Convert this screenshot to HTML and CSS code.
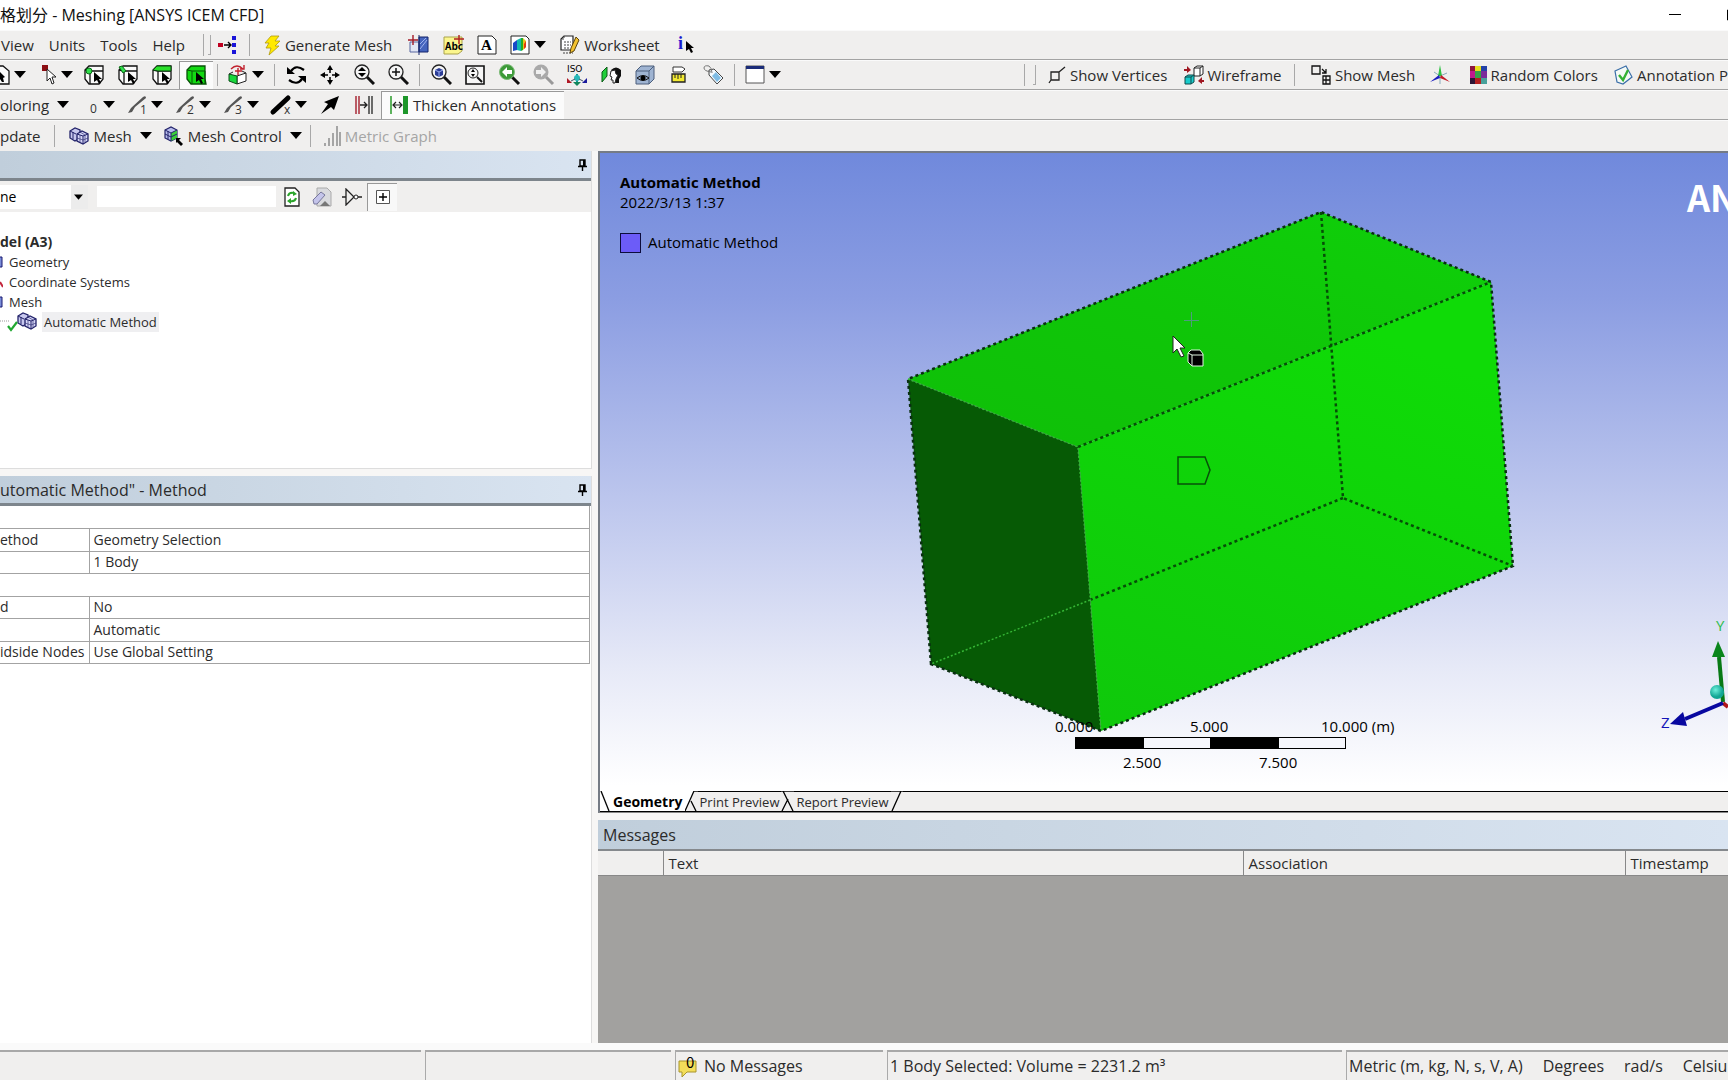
FILE: index.html
```html
<!DOCTYPE html>
<html lang="en">
<head>
<meta charset="utf-8">
<title>Meshing [ANSYS ICEM CFD]</title>
<link rel="stylesheet" href="styles.css">
</head>
<body>
<svg class="defs" width="0" height="0" aria-hidden="true">
  <defs>
    <symbol id="caret" viewBox="0 0 12 7"><path d="M0 0h12L6 7z" fill="#000"/></symbol>
    <symbol id="box" viewBox="0 0 20 20"><path d="M1 5L5 1H19V14L15 19H5L1 14Z" fill="#fafafa" stroke="#111" stroke-width="1.3"/><path d="M1 5L6 6V19M6 6H19" fill="none" stroke="#111" stroke-width="1.3"/></symbol>
    <symbol id="ptr" viewBox="0 0 8 12"><path d="M0 0L8 7H5L7 11L5 12L3 8L0 10Z" fill="#000"/></symbol>
    <symbol id="lens" viewBox="0 0 21 21"><path d="M13 13l7 7" stroke="#111" stroke-width="3"/><circle cx="8" cy="8" r="7" fill="#f4f4f4" stroke="#222" stroke-width="1.3"/></symbol>
    <symbol id="meshcubes" viewBox="0 0 20 18"><path d="M1 4L6 1l5 2v8l-5 3-5-3z" fill="#c8c8ee" stroke="#23236a" stroke-width="1.3"/><path d="M8 7l5-3 6 3v7l-5 3-6-3z" fill="#d5d5f6" stroke="#23236a" stroke-width="1.3"/><path d="M8 7l6 2 5-2M14 9v8M1 4l6 3M4 5v7" fill="none" stroke="#23236a"/><path d="M11 8v7M16 8v7M8 11l6 2 5-2M11 5l5 3" fill="none" stroke="#23236a" stroke-width=".6"/></symbol>
    <symbol id="pin" viewBox="0 0 9 12"><path d="M2 1H7V7H2ZM0 7.500H9M4.500 8V12" fill="none" stroke="#000" stroke-width="1.4"/><path d="M5 1h2v6H5z"/></symbol>
    <symbol id="stroke" viewBox="0 0 20 20"><path d="M1 18L4 13 16 2q3-2 3 1L8 12 5 17Z" fill="#555"/></symbol>
  </defs>
</svg>
<div class="app">
  <header class="titlebar">
    <h1 class="caption">格划分 - Meshing [ANSYS ICEM CFD]</h1>
    <div class="winctl">
      <button class="win" aria-label="Minimize"><svg width="12" height="12"><path d="M0 5.500H12" stroke="#000"/></svg></button>
      <button class="win edge" aria-label="Maximize"><svg width="12" height="12"><path d="M.5 1V11H11V1Z" fill="none" stroke="#000"/></svg></button>
    </div>
  </header>

  <nav class="bar" aria-label="Menu">
    <button class="menu">View</button><button class="menu">Units</button><button class="menu">Tools</button><button class="menu">Help</button>
    <span class="sep"></span><span class="grip"></span>
    <button class="ico" aria-label="Connections"><svg width="20" height="18"><path d="M0 7h5v4H0z" fill="#c00020"/><path d="M6 9h7M10 6l3 3-3 3" fill="none" stroke="#000" stroke-width="1.400"/><path d="M14 0h4v4h-4zM14 7h4v4h-4zM14 14h4v4h-4z" fill="#1a14d8"/></svg></button>
    <span class="sep wide"></span>
    <button class="cmd"><svg width="17" height="20"><path d="M7 1h8l-4 5h5l-5 5h4L5 20l2-7H2l3-5H1z" fill="#ffe900" stroke="#b09a10" stroke-width=".8"/></svg>Generate Mesh</button>
    <button class="ico" aria-label="Section plane"><svg width="22" height="20"><path d="M2 7h9v10H2z" fill="#e2e6f4" stroke="#5966a0"/><path d="M11 2h9v15h-9z" fill="#4564bd" stroke="#14246a"/><path d="M12 14l7-9M12 9l6-6" stroke="#9eb2ee"/><path d="M5 0v10M0 5h10" stroke="#a31c28" stroke-width="1.400"/><path d="M11 0v20" stroke="#14246a"/></svg></button>
    <button class="ico" aria-label="Annotation"><svg width="21" height="20"><path d="M1 2h18v14l-4 3H1z" fill="#fbf68d" stroke="#aaa34d"/><text x="2" y="15" class="abc">Abc</text><path d="M16 0v9M11 4h10" stroke="#b02020" stroke-width="1.400"/></svg></button>
    <button class="ico" aria-label="Text"><svg width="20" height="20"><path d="M1 1h14l4 4v14H1z" fill="#fff" stroke="#222"/><text x="4" y="15" class="serif">A</text></svg></button>
    <button class="ico dd" aria-label="Contours"><svg width="20" height="20"><path d="M1 1h15l3 3v15H1z" fill="#fff" stroke="#222"/><path d="M3 8l4-3v10l-4 1z" fill="#1749c8"/><path d="M7 5l4-2v13l-4-1z" fill="#12b8b0"/><path d="M11 3h2v12l-2 1z" fill="#22ae22"/><path d="M13 3l3 3v6l-3 3z" fill="#e8c21a"/><path d="M16 6v6l-2 2V9z" fill="#e03a12"/></svg><svg class="car"><use href="#caret"/></svg></button>
    <button class="cmd"><svg width="20" height="20"><path d="M4 1h9v14H1V4z" fill="#fff" stroke="#222" stroke-width="1.200"/><path d="M4 1v3H1M4 7h7M4 10h7M4 13h5M3 18h10" fill="none" stroke="#444" stroke-dasharray="2 1"/><path d="M16 2l3 3-5 11-4 2 1-5z" fill="#f2c230" stroke="#5b430c"/></svg>Worksheet</button>
    <button class="ico" aria-label="Selection info"><svg width="18" height="20"><text x="0" y="14" class="info">i</text><g transform="translate(8 6)"><path d="M0 0L8 7H5L7 11L5 12L3 8L0 10Z"/></g></svg></button>
  </nav>

  <div class="bar split">
    <div class="group">
      <button class="ico dd cut" aria-label="Select type"><svg width="10" height="20"><path d="M0 1H3L9 6V19H0" fill="#fafafa" stroke="#111" stroke-width="1.300"/><path d="M0 7L5 12 3 13 4 17 2 17 0 14"/></svg><svg class="car"><use href="#caret"/></svg></button>
      <button class="ico dd end" aria-label="Select mode"><svg width="15" height="20"><path d="M0 0h6v6H0z" fill="#8b0d12"/><path d="M5 4V16L8 13 10 19 12 18 10 12H14Z" fill="#fff" stroke="#222"/></svg><svg class="car"><use href="#caret"/></svg></button>
      <button class="ico" aria-label="Vertex"><svg width="20" height="20"><use href="#box" width="20" height="20"/><circle cx="5" cy="6" r="3" fill="#2fe04a" stroke="#0a6b16"/><use href="#ptr" x="10" y="7" width="8" height="12"/></svg></button>
      <button class="ico" aria-label="Edge"><svg width="20" height="20"><use href="#box" width="20" height="20"/><path d="M1 2l3-1 4 5-3 2z" fill="#2fe04a" stroke="#0a6b16"/><use href="#ptr" x="10" y="7" width="8" height="12"/></svg></button>
      <button class="ico" aria-label="Face"><svg width="20" height="20"><use href="#box" width="20" height="20"/><path d="M1 5L5 1H19V6H6Z" fill="#2be02b" stroke="#0a4b10"/><use href="#ptr" x="10" y="7" width="8" height="12"/></svg></button>
      <button class="ico on" aria-label="Body"><svg width="21" height="20"><path d="M1 5L5 1H19V14L20 19H5L1 14Z" fill="#12d912" stroke="#085208" stroke-width="1.300"/><path d="M1 5L6 6V19M6 6H19V19" fill="none" stroke="#085208"/><use href="#ptr" x="10" y="7" width="8" height="12"/></svg></button>
      <span class="sep"></span>
      <button class="ico dd" aria-label="Extend"><svg width="20" height="20"><path d="M9 11l9-3v8l-9 3z" fill="#fff" stroke="#222"/><path d="M1 9l8 2v8l-8-3z" fill="#18d83c" stroke="#0b4d16"/><path d="M1 9l4-2M14 6l4 2" stroke="#222"/><path d="M3 4q6-6 12 0M16 0v4h-4M10 3v7M7 6h7" fill="none" stroke="#c0202c" stroke-width="1.400"/></svg><svg class="car"><use href="#caret"/></svg></button>
      <span class="sep"></span>
      <button class="ico" aria-label="Rotate"><svg width="19" height="20"><path d="M4 6Q9-1 17 5M15 14Q10 21 2 15" fill="none" stroke="#000" stroke-width="2.200"/><path d="M0 2v7h8zM19 18v-7h-8z"/></svg></button>
      <button class="ico" aria-label="Pan"><svg width="20" height="20"><path d="M10 3v5M10 12v5M3 10h5M12 10h5" stroke="#000" stroke-width="1.500"/><path d="M10 0l3 5H7zM10 20l3-5H7zM0 10l5-3v6zM20 10l-5-3v6z"/></svg></button>
      <button class="ico" aria-label="Zoom"><svg width="21" height="21"><use href="#lens" width="21" height="21"/><path d="M8 3l4 4H4zM8 13l4-4H4z"/></svg></button>
      <button class="ico" aria-label="Box zoom"><svg width="21" height="21"><use href="#lens" width="21" height="21"/><path d="M8 4v8M4 8h8" stroke="#111" stroke-width="1.500"/></svg></button>
      <span class="sep"></span>
      <button class="ico" aria-label="Zoom to fit"><svg width="21" height="21"><use href="#lens" width="21" height="21"/><path d="M4 6l4-2 4 2v5l-4 2-4-2z" fill="#2b3c95"/><path d="M4 6l4 2 4-2M8 8v5" stroke="#9fb0f5" fill="none"/></svg></button>
      <button class="ico" aria-label="Magnifier"><svg width="20" height="20"><path d="M1 1h18v18H1z" fill="#f6f6f6" stroke="#111" stroke-width="1.600"/><circle cx="8" cy="8" r="5" fill="none" stroke="#222"/><path d="M12 12l5 5" stroke="#111" stroke-width="2"/><path d="M8 4l2 3H6zM8 12l2-3H6z"/></svg></button>
      <button class="ico" aria-label="Previous view"><svg width="21" height="21"><path d="M13 13l7 7" stroke="#111" stroke-width="3"/><circle cx="8" cy="8" r="7.500" fill="#3c9a38" stroke="#7dbb78"/><path d="M3 8l5-5v3h5v4H8v3z" fill="#fff"/></svg></button>
      <button class="ico" aria-label="Next view"><svg width="21" height="21"><path d="M13 13l7 7" stroke="#999" stroke-width="3"/><circle cx="8" cy="8" r="7.500" fill="#a9a9a9"/><path d="M13 8L8 3v3H3v4h5v3z" fill="#f0f0f0"/></svg></button>
      <button class="ico" aria-label="Isometric"><svg width="21" height="22"><text x="0" y="8" class="iso">ISO</text><path d="M10 10v9" stroke="#159a9a" stroke-width="2"/><circle cx="10" cy="14" r="3" fill="#29b9b9"/><path d="M4 17l4-2M16 17l-4-2" stroke="#456"/><path d="M0 14v5h5z" fill="#b01825"/><path d="M20 14v5h-5z" fill="#1a1a9c"/><path d="M6 18h8l-4 4z" fill="#14865a"/></svg></button>
      <button class="ico" aria-label="Look at"><svg width="21" height="20"><path d="M1 7l5-5v9l-5 6z" fill="#21cf3a" stroke="#0a5a16"/><path d="M10 5q5-5 10 0v6l-2 3v4h-4l1-5-2-4z" fill="#111"/><path d="M10 6l4-1 1 4 2 1-2 4-1 4h-2v-3h-2l1-3-2-1z" fill="#fff" stroke="#222"/></svg></button>
      <button class="ico" aria-label="View manager"><svg width="20" height="20"><path d="M1 6l5-5h13v13l-5 5H1z" fill="#9fb4d2" stroke="#4c5f7c"/><path d="M1 6h13v13M14 6l5-5" fill="none" stroke="#4c5f7c"/><path d="M2 13q6-5 12 0-6 5-12 0z" fill="#8c9fbd" stroke="#111"/><circle cx="8" cy="13" r="2.500"/></svg></button>
      <button class="ico" aria-label="Ruler"><svg width="16" height="20"><path d="M2 2h9l3 2-3 3H2z" fill="#fff" stroke="#333"/><path d="M1 9h13v8H1z" fill="#f3ea32" stroke="#222" stroke-width="1.300"/><path d="M4 9v4M7 9v5M10 9v4" stroke="#222"/></svg></button>
      <button class="ico" aria-label="Tag"><svg width="21" height="20"><path d="M6 5l5-1 9 9-6 6-8-9z" fill="#f4faff" stroke="#444"/><path d="M9 11l4-4 5 6-4 4z" fill="#7fbce4"/><path d="M8 7Q1 6 1 3t5-2q3 2 3 7" fill="none" stroke="#777"/></svg></button>
      <span class="sep"></span>
      <button class="ico dd" aria-label="Viewports"><svg width="20" height="20"><path d="M1 1h18v17H1z" fill="#fff" stroke="#555"/><path d="M1 1h18v3H1z" fill="#1b2c78"/></svg><svg class="car"><use href="#caret"/></svg></button>
    </div>
    <div class="group right">
      <span class="sep"></span><span class="grip"></span>
      <button class="cmd"><svg width="18" height="18"><path d="M3 6h8v8H3zM11 6l6-5M3 14l-2 3" fill="none" stroke="#222" stroke-width="1.300"/></svg>Show Vertices</button>
      <button class="cmd"><svg width="20" height="20"><path d="M10 3l3-2h6v8l-3 2h-6zM10 3h6v8M16 3l3-2" fill="#fff" stroke="#222"/><path d="M1 12l3-2h6v7l-3 2H1zM1 12h6v7M7 12l3-2" fill="#18cccc" stroke="#114b4b"/><path d="M0 4h3V1l4 4-4 3V6H0zM20 15h-2v-3l-4 4 4 3v-2h2z" fill="#a01822"/></svg>Wireframe</button>
      <span class="sep"></span>
      <button class="cmd"><svg width="20" height="20"><path d="M1 1h8v8H1zM12 11h7v8h-7zM12 15h7M15 11v8M11 4l4 4M15 4v4h-4" fill="none" stroke="#111" stroke-width="1.300"/></svg>Show Mesh</button>
      <button class="ico" aria-label="Axes"><svg width="20" height="20"><path d="M10 11v8M10 11L4 7M10 11l7-3" stroke="#8ab" fill="none"/><path d="M10 0l2 11H8z" fill="#2fc143"/><path d="M9 10L0 17l10-4z" fill="#1c1cc0"/><path d="M11 10l9 7-10-4z" fill="#c41c28"/></svg></button>
      <button class="cmd"><svg width="17" height="18"><path d="M0 0h5v5H0z" fill="#8d1440"/><path d="M5 0h6v5H5z" fill="#e8df1c"/><path d="M11 0h6v5h-6z" fill="#2442a8"/><path d="M0 5h5v7H0z" fill="#c01a8c"/><path d="M5 5h6v7H5z" fill="#35a446"/><path d="M11 5h6v7h-6z" fill="#7b2b9a"/><path d="M0 12h5v6H0z" fill="#2d1535"/><path d="M5 12h6v6H5z" fill="#b42020"/><path d="M11 12h6v6h-6z" fill="#48a09a"/></svg>Random Colors</button>
      <button class="cmd tail"><svg width="19" height="20"><path d="M1 6L12 1l6 11-9 7-6-2z" fill="#f4faf6" stroke="#3a6ea8" stroke-width="1.200"/><path d="M5 10l4 5 5-10" fill="none" stroke="#33b233" stroke-width="2.400"/></svg>Annotation P</button>
    </div>
  </div>

  <div class="bar">
    <button class="cmd drop first">oloring<svg class="car"><use href="#caret"/></svg></button>
    <button class="ico dd" aria-label="Free edges"><svg width="20" height="20"><text x="11" y="18" class="num">0</text></svg><svg class="car"><use href="#caret"/></svg></button>
    <button class="ico dd" aria-label="Single edges"><svg width="20" height="20"><use href="#stroke" width="20" height="20"/><text x="13" y="19" class="num">1</text></svg><svg class="car"><use href="#caret"/></svg></button>
    <button class="ico dd" aria-label="Double edges"><svg width="20" height="20"><use href="#stroke" width="20" height="20"/><text x="12" y="19" class="num">2</text></svg><svg class="car"><use href="#caret"/></svg></button>
    <button class="ico dd" aria-label="Triple edges"><svg width="20" height="20"><use href="#stroke" width="20" height="20"/><text x="12" y="19" class="num">3</text></svg><svg class="car"><use href="#caret"/></svg></button>
    <button class="ico dd" aria-label="Multiple edges"><svg width="20" height="20"><path d="M2 17L17 3" stroke="#000" stroke-width="5" stroke-linecap="round"/><text x="13" y="19" class="num">x</text></svg><svg class="car"><use href="#caret"/></svg></button>
    <button class="ico" aria-label="Edge direction"><svg width="20" height="20"><path d="M19 1l-5 14-3-3-10 7 7-10-4-2z"/></svg></button>
    <button class="ico" aria-label="Edge gap"><svg width="18" height="20"><path d="M1 1v18M4 1v18" stroke="#a41f2c" stroke-width="1.400"/><path d="M14 1v18M17 1v18M5 10h7M9 7l3 3-3 3" fill="none" stroke="#222" stroke-width="1.300"/></svg></button>
    <button class="cmd pressed"><svg width="19" height="18"><path d="M1 0v18" stroke="#2a9b2a" stroke-width="1.500"/><path d="M3 9h9M6 6L3 9l3 3M9 6l3 3-3 3" fill="none" stroke="#222" stroke-width="1.200"/><path d="M13 0h5v18h-5z" fill="#1d962a"/></svg>Thicken Annotations</button>
  </div>

  <div class="bar last">
    <button class="cmd first">pdate</button>
    <span class="sep wide"></span>
    <button class="cmd drop"><svg width="20" height="18"><use href="#meshcubes"/></svg>Mesh<svg class="car"><use href="#caret"/></svg></button>
    <button class="cmd drop"><svg width="20" height="20"><path d="M1 4l6-3 6 3v8l-6 3-6-3z" fill="#b7bcec" stroke="#23236a" stroke-width="1.200"/><path d="M7 7l6-3v8l-6 3z" fill="#39cf39"/><path d="M1 4l6 3 6-3M7 7v8M4 5v8M1 8l6 3M7 11l6-3" fill="none" stroke="#23236a"/><path d="M12 12h5l-2 2 4 4-2 2-4-4-1 1z"/></svg>Mesh Control<svg class="car"><use href="#caret"/></svg></button>
    <span class="sep"></span>
    <button class="cmd" disabled><svg width="18" height="20"><path d="M1 17h2v3H1zM5 12h2v8H5zM9 7h2v13H9zM13 0h2v20h-2zM16 6h2v14h-2z" fill="#a5a5a5"/></svg>Metric Graph</button>
  </div>

  <main class="work">
    <aside class="side">
      <section class="panel outline">
        <div class="phead"><span></span><button class="pinbtn" aria-label="Pin outline"><svg width="9" height="12"><use href="#pin"/></svg></button></div>
        <div class="filter">
          <div class="combo"><select aria-label="Filter"><option>ne</option></select><svg class="mini"><use href="#caret"/></svg></div>
          <input class="find" type="text" aria-label="Filter text">
          <button class="small" aria-label="Refresh"><svg width="16" height="20"><path d="M1 1h10l4 4v14H1z" fill="#fff" stroke="#222" stroke-width="1.300"/><path d="M4 9q1-4 6-3M12 11q-1 4-6 3" fill="none" stroke="#2ba52b" stroke-width="2"/><path d="M9 4l4 3-4 2zM7 11l-4 3 4 3z" fill="#2ba52b"/></svg></button>
          <button class="small" aria-label="Clear"><svg width="20" height="20"><path d="M5 1h10l4 4v14H5z" fill="#d9dade" stroke="#aaa"/><path d="M1 13L9 5l4 3-8 9H2z" fill="#c4c4ea" stroke="#77779c"/><path d="M13 14l5 5H8z" fill="#777"/></svg></button>
          <button class="small" aria-label="Filter gate"><svg width="20" height="18"><path d="M0 9h4M4 1v16l8-8zM16 9h4" fill="none" stroke="#222" stroke-width="1.300"/><circle cx="14" cy="9" r="2" fill="#fff" stroke="#222"/></svg></button>
          <button class="small on" aria-label="Expand all"><svg width="14" height="14"><path d="M.5.5h13v13H.5z" fill="#fff" stroke="#555"/><path d="M7 3v8M3 7h8" stroke="#000" stroke-width="1.400"/></svg></button>
        </div>
        <ul class="tree">
          <li class="root">del (A3)</li>
          <li><svg width="3" height="12"><path d="M0 1h2v10H0" fill="#7b8dd8" stroke="#191970"/></svg>Geometry</li>
          <li><svg width="3" height="12"><path d="M0 6l3 5" stroke="#c3263c" stroke-width="2"/></svg>Coordinate Systems</li>
          <li><svg width="3" height="12"><path d="M0 1h2v10H0" fill="#7b8dd8" stroke="#191970"/></svg>Mesh</li>
          <li class="leaf"><svg width="38" height="20"><path d="M0 9h9" stroke="#999" stroke-dasharray="1 1"/><use href="#meshcubes" x="17" y="0" width="20" height="18"/><path d="M8 14l3 4 6-8" fill="none" stroke="#22a832" stroke-width="2.200"/></svg><span class="sel">Automatic Method</span></li>
        </ul>
      </section>
      <section class="panel details">
        <div class="phead"><span>utomatic Method" - Method</span><button class="pinbtn" aria-label="Pin details"><svg width="9" height="12"><use href="#pin"/></svg></button></div>
        <table class="props">
          <colgroup><col class="key"><col></colgroup>
          <tr><th colspan="2"></th></tr>
          <tr><th scope="row">ethod</th><td>Geometry Selection</td></tr>
          <tr><th scope="row"></th><td>1 Body</td></tr>
          <tr><th colspan="2"></th></tr>
          <tr><th scope="row">d</th><td>No</td></tr>
          <tr><th scope="row"></th><td>Automatic</td></tr>
          <tr><th scope="row">idside Nodes</th><td>Use Global Setting</td></tr>
        </table>
      </section>
    </aside>

    <div class="content">
      <section class="view">
        <svg class="scene" viewBox="600 153 1128 638" preserveAspectRatio="xMidYMid slice" role="img" aria-label="Body selected in the geometry view">
          <defs>
            <linearGradient id="top" x1="0" y1="1" x2="1" y2="0"><stop offset="0" stop-color="#0fbf08"/><stop offset=".5" stop-color="#0fc608"/><stop offset="1" stop-color="#0fd00a"/></linearGradient>
            <linearGradient id="side" x1="0" y1="1" x2=".4" y2="0"><stop offset="0" stop-color="#0fc80b"/><stop offset="1" stop-color="#0fdb07"/></linearGradient>
            <radialGradient id="ball" cx=".4" cy=".35"><stop offset="0" stop-color="#6ff0dc"/><stop offset="1" stop-color="#12a594"/></radialGradient>
          </defs>
          <path d="M908 379L1321 212 1491 282 1078 447Z" fill="url(#top)"/>
          <path d="M1078 447L1491 282 1513 566 1101 731Z" fill="url(#side)"/>
          <path d="M908 379L1078 447 1101 731 931 664Z" fill="#065a05"/>
          <g fill="none" stroke="#064d08" stroke-width="2.500" stroke-dasharray="3 3">
            <path d="M931 664L908 379L1321 212L1491 282L1513 566L1101 731Z" stroke="#0a2e12"/>
            <path d="M1078 447L1491 282M1321 212L1343 498L1513 566M1343 498L1090 600"/>
          </g>
          <path d="M908 379L1078 447L1101 731M1090 600L931 664" fill="none" stroke="#35b435" stroke-width="1.500" stroke-dasharray="2 2"/>
          <path d="M1178 457H1205L1210 470 1205 484H1178Z" fill="none" stroke="#07500a" stroke-width="1.500"/>
          <path d="M1191.500 312v15M1184 320.500h15" stroke="#4f9a80"/>
          <path d="M1173 336V353L1177 349 1181 357 1184 356 1180 348H1185Z" fill="#fff" stroke="#222"/>
          <path d="M1188 353L1191 350H1200L1203 354V366H1192L1188 362Z" fill="#000" stroke="#dff5df"/><path d="M1188 353L1192 355V366M1192 355H1203" fill="none" stroke="#dff5df"/>
          <text x="620" y="188" class="label strong">Automatic Method</text>
          <text x="620" y="208" class="label">2022/3/13 1:37</text>
          <rect x="620.500" y="233.500" width="20" height="19" fill="#6c5cf8" stroke="#0c0c3c"/>
          <text x="648" y="248" class="label">Automatic Method</text>
          <text x="1687" y="212" class="brand">AN</text>
          <g class="label"><text x="1055" y="732">0.000</text><text x="1190" y="732">5.000</text><text x="1321" y="732">10.000 (m)</text><text x="1123" y="768">2.500</text><text x="1259" y="768">7.500</text></g>
          <rect x="1075.500" y="737.500" width="270" height="11" fill="#f6f7fd" stroke="#000"/><path d="M1075 737h69v12h-69zM1210 737h69v12h-69z"/>
          <path d="M1719 657L1723 702" stroke="#087a16" stroke-width="4"/><path d="M1718 641L1725 657H1712Z" fill="#0a861c"/>
          <path d="M1723 703L1728 707" stroke="#b0181c" stroke-width="4"/><path d="M1723 703L1685 719" stroke="#0808a0" stroke-width="4"/><path d="M1670 724L1683 712 1687 726Z" fill="#0808a0"/>
          <circle cx="1717" cy="692" r="7" fill="url(#ball)"/>
          <text x="1716" y="631" class="label" fill="#2ebd4c">Y</text><text x="1661" y="728" class="label" fill="#1414b8">Z</text>
        </svg>
        <div class="tabs">
          <svg width="11" height="20"><path d="M1 0L9 20" stroke="#000" stroke-width="1.300"/></svg>
          <button class="tab cur">Geometry</button>
          <svg width="13" height="20"><path d="M10 0H13V20H0Z" fill="#f0efee"/><path d="M0 20L9 0H13M6 10L11 20" fill="none" stroke="#000" stroke-width="1.300"/></svg>
          <button class="tab">Print Preview</button>
          <svg class="grey" width="13" height="20"><path d="M0 0H13M1 20L7 8M2 0L12 20" fill="none" stroke="#000" stroke-width="1.300"/></svg>
          <button class="tab">Report Preview</button>
          <svg class="grey" width="12" height="20"><path d="M0 0H12M1 20L10 0" fill="none" stroke="#000" stroke-width="1.300"/></svg>
          <span class="rest"></span>
        </div>
      </section>
      <section class="messages">
        <div class="mhead">Messages</div>
        <table class="msgs">
          <thead><tr><th class="c0"></th><th class="c1">Text</th><th class="c2">Association</th><th>Timestamp</th></tr></thead>
        </table>
      </section>
    </div>
  </main>

  <footer class="status">
    <div class="cell s0"></div>
    <div class="cell s1"></div>
    <div class="cell s2"><svg width="20" height="22"><path d="M1 6h17v11H9l-5 5v-5H1z" fill="#f3de5a" stroke="#a8952d"/><text x="8" y="13" class="zero">0</text></svg>No Messages</div>
    <div class="cell s3">1 Body Selected: Volume = 2231.2 m³</div>
    <div class="cell s4"><span>Metric (m, kg, N, s, V, A)</span><span>Degrees</span><span>rad/s</span><span>Celsiu</span></div>
  </footer>
</div>
</body>
</html>
```
FILE: styles.css
```css
* { box-sizing: border-box; }
body { margin: 0; background: #f0efee; color: #2b2b2b; font: 15px/20px "Open Sans", "Noto Sans", "Noto Sans CJK SC", sans-serif; }
button { font: inherit; color: inherit; background: none; border: 0; padding: 0; display: flex; align-items: center; flex: none; white-space: nowrap; }
svg { flex: none; display: block; }
.defs { position: absolute; }
.app { display: flex; flex-direction: column; height: 100vh; overflow: hidden; }

.titlebar { display: flex; justify-content: space-between; align-items: center; height: 30px; background: #fff; flex: none; }
.caption { margin: 0; font-size: 16px; font-weight: 400; color: #111; }
.winctl { display: flex; gap: 46px; overflow: hidden; }
.win.edge { width: 1px; overflow: hidden; }

.bar { display: flex; align-items: center; height: 30px; flex: none; border-bottom: 1px solid #a3a3a3; box-shadow: inset 0 1px #fafafa; overflow: hidden; }
.bar svg { overflow: visible; }
.bar.last { height: 31px; border-bottom: 0; }
.split { justify-content: space-between; }
.group { display: flex; align-items: center; align-self: stretch; }
.right { width: 41%; justify-content: space-between; }
.menu { padding: 0 14px 0 1px; }
.sep { width: 1px; height: 22px; background: #a8a8a8; margin: 0 4px; flex: none; }
.sep.wide { margin-right: 6px; }
.grip { width: 3px; height: 20px; border: solid #aaa; border-width: 0 1px 1px 0; flex: none; }
.ico { width: 34px; height: 28px; justify-content: center; }
.ico.dd { width: 48px; gap: 4px; }
.ico.cut { width: 29px; justify-content: flex-start; }
.ico.end { justify-content: flex-end; padding-right: 4px; }
.ico.on { background: #fbfbfb; border: solid #999; border-width: 1px 0 0 1px; }
.car { width: 12px; height: 7px; }
.cmd { height: 28px; padding: 0 10px 0 8px; gap: 4px; }
.cmd.first { padding-left: 0; }
.cmd.tail { padding-right: 0; }
.cmd.drop { padding-right: 4px; }
.cmd.drop .car { margin-left: 4px; }
.right .cmd:not(.tail) { padding-right: 4px; }
.cmd:disabled { color: #a5a5a5; }
.cmd.pressed { background: #fbfbfb; border: solid #999; border-width: 1px 0 0 1px; padding: 0 8px; }
.abc { font: 700 10px "Noto Sans CJK SC", sans-serif; }
.serif { font: 700 15px "Liberation Serif", serif; }
.info { font: 700 18px "Liberation Serif", serif; fill: #1a1ad0; }
.iso { font: 9px "DejaVu Sans", sans-serif; }
.num { font: 12px "Open Sans", sans-serif; fill: #333; }
.zero { font: 15px "Noto Sans CJK SC", sans-serif; }

.work { display: flex; flex: 1; min-height: 0; gap: 6px; background: #f7f6f5; }
.side { width: 592px; flex: none; display: flex; flex-direction: column; gap: 7px; }
.panel { background: #fff; border-right: 1px solid #ddd; }
.outline { height: 318px; border-bottom: 1px solid #ddd; }
.details { flex: 1; font-size: 14px; }
.phead { display: flex; justify-content: space-between; align-items: center; height: 30px; padding-right: 4px; border-bottom: 3px solid #7d858c; background: linear-gradient(90deg, #c0cedb, #d9e4f1); font-size: 16px; }
.filter { display: flex; align-items: center; height: 31px; background: #f0efee; }
.combo { position: relative; width: 88px; height: 24px; background: linear-gradient(90deg, #fff 71px, #ececec 71px); }
.combo select { width: 100%; height: 24px; border: 0; padding: 0; background: none; appearance: none; font-size: 14px; font-family: inherit; }
.mini { position: absolute; right: 5px; top: 9px; width: 9px; height: 6px; pointer-events: none; }
.find { width: 179px; height: 21px; margin: 0 1px 0 9px; border: 0; padding: 0 4px; background: #fff; font: inherit; }
.small { width: 30px; height: 28px; justify-content: center; }
.small.on { background: #f8f8f8; border: solid #999; border-width: 1px 0 0 1px; }
.tree { list-style: none; margin: 0; padding: 20px 0 0; font-size: 13px; }
.tree li { display: flex; align-items: center; height: 20px; gap: 6px; }
.tree .root { font-size: 14px; font-weight: 700; }
.tree .leaf { gap: 4px; }
.sel { background: #efeff1; padding: 0 2px; }
.props { width: 590px; height: 158px; border-collapse: collapse; table-layout: fixed; }
.props th, .props td { border: 1px solid #a3a3a3; border-left: 0; border-top: 0; padding: 0 0 0 4px; height: 22px; line-height: 20px; font-weight: 400; text-align: left; white-space: nowrap; }
.props th { padding: 0; }
.key { width: 89px; }

.content { flex: 1; min-width: 0; display: flex; flex-direction: column; gap: 7px; }
.view { flex: 1; min-height: 0; display: flex; flex-direction: column; border-left: 2px solid #757b85; border-top: 2px solid #757b85; border-bottom: 1px solid #888; background: linear-gradient(#7089dc, #8b9de2 22%, #c0c9ee 55%, #e6e9f7 78%, #fff 96%); }
.scene { width: 100%; flex: 1; min-height: 0; }
.label { font: 15px "Open Sans", sans-serif; }
.strong { font-weight: 700; }
.brand { font: 700 36px "Noto Sans CJK SC", sans-serif; fill: #fff; }
.tabs { display: flex; height: 21px; flex: none; border-bottom: 1px solid #000; background: #fff; }
.tab { font-size: 13px; line-height: 18px; padding: 0 2px; background: #f0efee; border-top: 1px solid #000; }
.tab.cur { font-size: 14px; font-weight: 700; background: #fff; border-top-color: #fff; color: #000; }
.grey, .rest { background: #f0efee; }
.rest { flex: 1; border-top: 1px solid #000; }
.messages { height: 223px; flex: none; background: #a2a19f; }
.mhead { height: 31px; padding: 5px 5px 4px; border-bottom: 2px solid #85898d; background: linear-gradient(90deg, #c0cedb, #d9e4f1); font-size: 16px; }
.msgs { width: 100%; border-collapse: collapse; table-layout: fixed; }
.msgs th { height: 24px; padding: 0 0 0 5px; text-align: left; font-weight: 400; background: #f0efee; border-right: 1px solid #888; border-bottom: 1px solid #888; }
.msgs th:last-child { border-right: 0; }
.c0 { width: 65px; }
.c1 { width: 580px; }
.c2 { width: 382px; }

.status { display: flex; gap: 4px; height: 37px; padding-top: 7px; flex: none; box-shadow: inset 0 7px #fafafa; }
.cell { display: flex; align-items: center; gap: 6px; padding-left: 2px; border-left: 1px solid #aaa; border-top: 2px solid #a8a8a8; white-space: nowrap; overflow: hidden; font-size: 16px; }
.s0 { width: 421px; border-left: 0; }
.s1 { width: 246px; }
.s2 { width: 208px; }
.s3 { flex: 1; }
.s4 { width: 382px; gap: 20px; }
```
